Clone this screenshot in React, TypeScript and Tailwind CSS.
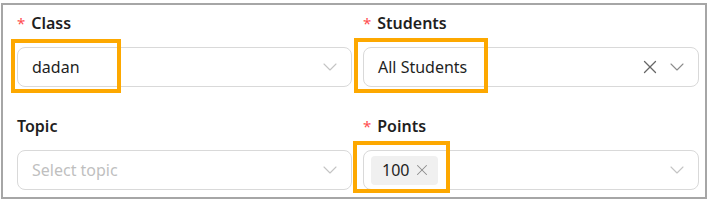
import { ChevronDown, X } from "lucide-react";

const FONT = "font-['Noto_Sans',sans-serif]";

function Label({ text, required }: { text: string; required?: boolean }) {
  return (
    <div className="mb-[12px] flex h-6 items-center text-[16px] font-semibold leading-6 text-[#1f1f1f]">
      {required && (
        <span className="mr-[6px] text-[15px] font-normal leading-none text-[#ff4d4f]">*</span>
      )}
      {text}
    </div>
  );
}

function Select({
  children,
  clear,
  darkArrow,
}: {
  children: React.ReactNode;
  clear?: boolean;
  darkArrow?: boolean;
}) {
  return (
    <div className="flex h-10 items-center rounded-lg border border-[#d9d9d9] bg-white pl-[14px] pr-[9px]">
      <div className="flex min-w-0 flex-1 items-center">{children}</div>
      {clear && <X className="mr-[4px] h-[22px] w-[22px] text-[#666666]" strokeWidth={1.4} />}
      <ChevronDown
        className={darkArrow ? "h-6 w-6 text-[#8c8c8c]" : "h-6 w-6 text-[#c4c4c4]"}
        strokeWidth={1.1}
      />
    </div>
  );
}

function Highlight({ className }: { className: string }) {
  return <div className={"pointer-events-none absolute border-4 border-[#fda800] " + className} />;
}

export default function App() {
  return (
    <div className={`${FONT} h-[201px] w-[710px] bg-white pl-px pt-[3px]`}>
      <div className="relative h-[196px] w-[706px] border-2 border-[#a6a6a6] bg-white pl-[14px] pt-[6px]">
        <div className="grid w-[682px] grid-cols-[335px_336px] gap-x-[11px] gap-y-[27px]">
          <div>
            <Label text="Class" required />
            <Select>
              <span className="text-[16px] text-[#1f1f1f]">dadan</span>
            </Select>
          </div>
          <div>
            <Label text="Students" required />
            <Select clear darkArrow>
              <span className="text-[16px] text-[#1f1f1f]">All Students</span>
            </Select>
          </div>
          <div>
            <Label text="Topic" />
            <Select>
              <span className="text-[16px] text-[#bfbfbf]">Select topic</span>
            </Select>
          </div>
          <div>
            <Label text="Points" required />
            <Select>
              <span className="-ml-[7px] flex h-[29px] items-center rounded bg-[#f0f0f0] pl-[11px] pr-[7px] text-[16px] text-[#1f1f1f]">
                100
                <X className="ml-[4px] h-[18px] w-[18px] text-[#8c8c8c]" strokeWidth={1.4} />
              </span>
            </Select>
          </div>
        </div>

        <Highlight className="left-[8px] top-[34px] h-[54px] w-[110px]" />
        <Highlight className="left-[351px] top-[33px] h-[55px] w-[134px]" />
        <Highlight className="left-[350px] top-[136px] h-[52px] w-[97px]" />
      </div>
    </div>
  );
}
